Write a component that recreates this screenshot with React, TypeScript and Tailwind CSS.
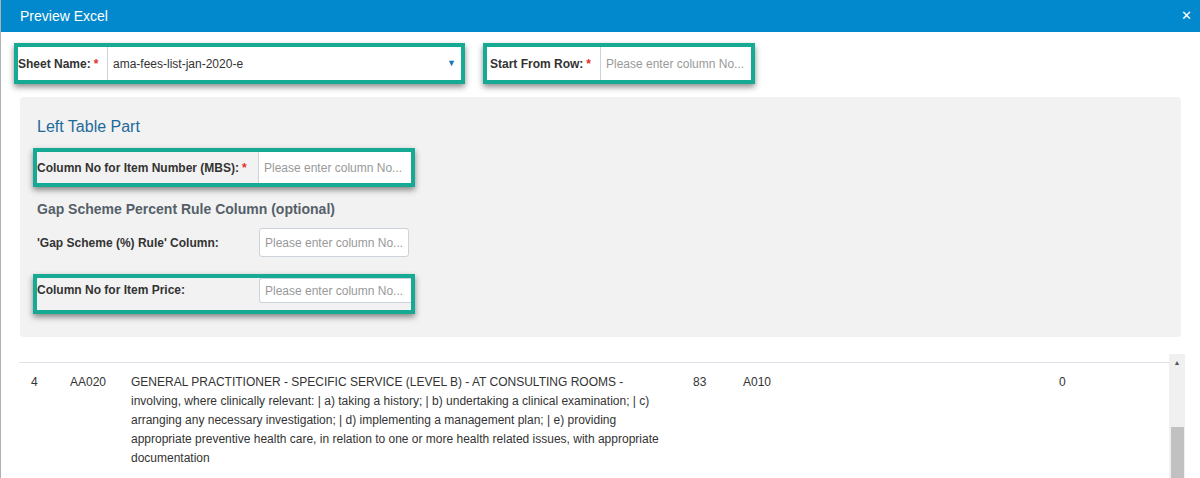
export default function App() {
  const f = { fontFamily: '"Liberation Sans", Arial, sans-serif' };
  const boxBase = "border-[4px] border-[#16a994] shadow-[0_3px_6px_rgba(0,0,0,0.45)] flex items-stretch";
  const inp = "w-[150px] h-[29px] border border-[#ccd3da] rounded-[3px] bg-white px-[5px] text-[12px] text-[#999] flex items-center whitespace-nowrap overflow-hidden";
  return (
    <div style={f} className="w-[1200px] h-[478px] bg-white overflow-hidden border-l border-[#b0b0b0] relative">
      <div className="h-[32px] bg-[#0288cc] flex items-center justify-between px-[19px] text-white">
        <span className="text-[14px]">Preview Excel</span>
        <span className="text-[13px] mr-[-11px]">✕</span>
      </div>
      <div className="flex gap-[18px] pl-[13px] pt-[11px]">
        <div className={boxBase + " bg-white w-[451px] h-[41px]"}>
          <div className="w-[90px] flex items-center text-[12px] font-bold text-[#333] border-r border-[#ccd3da]">Sheet Name:<span className="text-[#e0312b] ml-[3px]">*</span></div>
          <div className="flex-1 flex items-center justify-between px-[5px] text-[12px] text-[#333]">ama-fees-list-jan-2020-e<span className="text-[#1a78b8] text-[9px]">▼</span></div>
        </div>
        <div className={boxBase + " bg-white w-[272px] h-[41px]"}>
          <div className="w-[114px] flex items-center pl-[3px] text-[12px] font-bold text-[#333] border-r border-[#ccd3da]">Start From Row:<span className="text-[#e0312b] ml-[3px]">*</span></div>
          <div className="flex-1 flex items-center px-[5px] text-[12px] text-[#999] whitespace-nowrap overflow-hidden">Please enter column No...</div>
        </div>
      </div>
      <div className="mx-[19px] mt-[13px] h-[240px] bg-[#f2f2f2] rounded-[4px] px-[17px] pt-[18px] relative">
        <div className="text-[16px] text-[#1d6a9a]">Left Table Part</div>
        <div className={boxBase + " bg-[#f2f2f2] w-[382px] h-[39px] ml-[-4px] mt-[9px]"}>
          <div className="w-[222px] flex items-center text-[12px] font-bold text-[#333] border-r border-[#ccd3da]">Column No for Item Number (MBS):<span className="text-[#e0312b] ml-[3px]">*</span></div>
          <div className="flex-1 flex items-center px-[5px] text-[12px] text-[#999] bg-white whitespace-nowrap overflow-hidden">Please enter column No...</div>
        </div>
        <div className="mt-[12px] text-[14px] font-bold text-[#555f69]">Gap Scheme Percent Rule Column (optional)</div>
        <div className="flex items-start mt-[8px]">
          <div className="w-[222px] text-[12px] font-bold text-[#333] pt-[6px]">'Gap Scheme (%) Rule' Column:</div>
          <div className={inp}>Please enter column No...</div>
        </div>
        <div className={boxBase + " bg-[#f2f2f2] w-[382px] h-[40px] ml-[-4px] mt-[17px]"}>
          <div className="w-[222px] text-[12px] font-bold text-[#333] pt-[3px]">Column No for Item Price:</div>
          <div className="flex-1 h-[25px] flex items-center px-[5px] text-[12px] text-[#999] bg-white border border-[#ccd3da] border-r-0 rounded-l-[3px] whitespace-nowrap overflow-hidden">Please enter column No...</div>
        </div>
      </div>
      <div className="mt-[25px] ml-[18px] w-[1150px] border-t border-[#dde3e8] flex text-[12px] text-[#333] leading-[19px] pt-[10px]">
        <div className="w-[51px] pl-[12px]">4</div>
        <div className="w-[61px]">AA020</div>
        <div className="w-[530px] mr-[32px]">GENERAL PRACTITIONER - SPECIFIC SERVICE (LEVEL B) - AT CONSULTING ROOMS - involving, where clinically relevant: | a) taking a history; | b) undertaking a clinical examination; | c) arranging any necessary investigation; | d) implementing a management plan; | e) providing appropriate preventive health care, in relation to one or more health related issues, with appropriate documentation</div>
        <div className="w-[50px]">83</div>
        <div className="w-[316px]">A010</div>
        <div>0</div>
      </div>
      <div className="absolute left-[1168px] top-[354px] w-[16px] h-[124px] bg-[#f0f0f0] flex flex-col items-center">
        <span className="text-[7px] text-[#555] mt-[4px]">▲</span>
        <div className="mt-[58px] w-[13px] flex-1 bg-[#c1c1c1]" />
      </div>
    </div>
  );
}
